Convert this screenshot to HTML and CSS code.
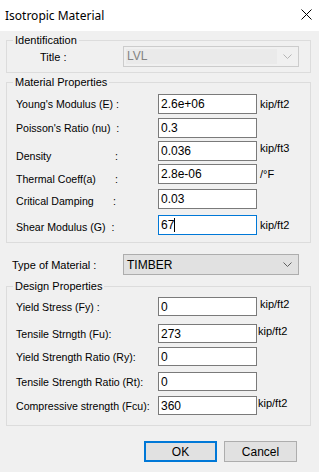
FILE: index.html
```html
<!DOCTYPE html>
<html>

<head>
  <title>Isotropic Material</title>
  <link rel="stylesheet" href="styles.css">
</head>

<body>
  <div class="window">
    <div class="titlebar">
      <span class="title">Isotropic Material</span>
      <svg class="close" width="11" height="11" viewBox="0 0 11 11">
        <path d="M0.5 0.5 L10.5 10.5 M10.5 0.5 L0.5 10.5" stroke="#000" stroke-width="1" fill="none"/>
      </svg>
    </div>

    <div class="dialog">
      <fieldset class="group group-id">
        <legend>Identification</legend>
        <div class="title-row">
          <span class="title-label">Title :</span>
          <div class="combo disabled">
            <span class="combo-text">LVL</span>
            <svg class="chevron" width="9" height="5" viewBox="0 0 9 5"><path d="M0.5 0.5 L4.5 4.5 L8.5 0.5" stroke="#b5b5b5" fill="none"/></svg>
          </div>
        </div>
      </fieldset>

      <fieldset class="group group-mat">
        <legend>Material Properties</legend>
        <div class="rows">
          <div class="row">
            <span class="label">Young's Modulus (E) :</span>
            <input class="field" value="2.6e+06">
            <span class="unit">kip/ft2</span>
          </div>
          <div class="row r-poisson">
            <span class="label">Poisson's Ratio (nu) &nbsp;:</span>
            <input class="field" value="0.3">
          </div>
          <div class="row r-density">
            <span class="label low"><span class="name">Density</span>:</span>
            <input class="field" value="0.036">
            <span class="unit up">kip/ft3</span>
          </div>
          <div class="row r-thermal">
            <span class="label low"><span class="name">Thermal Coeff(a)</span>:</span>
            <input class="field" value="2.8e-06">
            <span class="unit">/°F</span>
          </div>
          <div class="row r-damping">
            <span class="label mid"><span class="name short">Critical Damping</span>:</span>
            <input class="field" value="0.03">
          </div>
          <div class="row r-shear">
            <span class="label mid">Shear Modulus (G) &nbsp;:</span>
            <div class="field focused">67<span class="caret"></span></div>
            <span class="unit">kip/ft2</span>
          </div>
        </div>
      </fieldset>

      <div class="type-row">
        <span class="type-label">Type of Material :</span>
        <div class="combo">
          <span class="combo-text">TIMBER</span>
          <svg class="chevron" width="9" height="5" viewBox="0 0 9 5"><path d="M0.5 0.5 L4.5 4.5 L8.5 0.5" stroke="#606060" fill="none"/></svg>
        </div>
      </div>

      <fieldset class="group group-design">
        <legend>Design Properties</legend>
        <div class="rows">
          <div class="row small">
            <span class="label">Yield Stress (Fy) :</span>
            <input class="field" value="0">
            <span class="unit up">kip/ft2</span>
          </div>
          <div class="row small r-tensile">
            <span class="label">Tensile Strngth (Fu):</span>
            <input class="field" value="273">
            <span class="unit up tight">kip/ft2</span>
          </div>
          <div class="row small r-ry">
            <span class="label">Yield Strength Ratio (Ry):</span>
            <input class="field" value="0">
          </div>
          <div class="row small r-rt">
            <span class="label">Tensile Strength Ratio (Rt):</span>
            <input class="field" value="0">
          </div>
          <div class="row small r-fcu">
            <span class="label">Compressive strength (Fcu):</span>
            <input class="field" value="360">
            <span class="unit up tight">kip/ft2</span>
          </div>
        </div>
      </fieldset>

      <div class="buttons">
        <button class="btn default">OK</button>
        <button class="btn">Cancel</button>
      </div>
    </div>
  </div>
</body>

</html>
```

FILE: styles.css
```css
body {
  margin: 0;
  background-color: #f0f0f0;
  font-family: "Liberation Sans", Arial, sans-serif;
  font-size: 10.6px;
  color: #000;
}

.window {
  width: 319px;
  height: 472px;
  background-color: #f0f0f0;
}

/* title bar */
.titlebar {
  height: 31px;
  background-color: #fff;
  display: flex;
  align-items: center;
  justify-content: space-between;
  padding: 0 7px 0 5px;
}

.title {
  font-family: "Noto Sans", sans-serif;
  font-size: 12px;
  margin-top: -1px;
}

.close {
  display: block;
  margin-top: -2px;
}

.dialog {
  padding: 3px 8px 0 6px;
}

/* group boxes */
.group {
  margin: 0;
  padding: 0;
  min-width: 0;
  border: 1px solid #dcdcdc;
}

.group legend {
  margin-left: 6px;
  padding: 0 2px;
  font-size: 11px;
  line-height: 12px;
}

.group-id {
  padding-bottom: 5px;
}

.group-mat {
  margin-top: 3px;
}

.group-design {
  margin-top: 5px;
}

.title-row {
  display: flex;
  align-items: center;
}

.title-label {
  margin-left: 33px;
  width: 83px;
  font-size: 11px;
}

/* combo boxes */
.combo {
  box-sizing: border-box;
  width: 176px;
  height: 21px;
  display: flex;
  align-items: center;
  justify-content: space-between;
  border: 1px solid #adadad;
  background-color: #e1e1e1;
  padding: 0 6px 0 3px;
}

.combo.disabled {
  border-color: #cccccc;
  background-color: #f0f0f0;
  padding: 2px 6px 2px 2px;
  align-items: stretch;
}

.combo.disabled .combo-text {
  flex: 1;
  background-color: #eaeaea;
  color: #838383;
  font-size: 12px;
  line-height: 15px;
  padding-left: 1px;
  margin-right: 6px;
}

.combo.disabled .chevron {
  align-self: center;
}

.combo-text {
  font-size: 12px;
}

.chevron {
  display: block;
}

/* property rows */
.rows {
  padding: 6px 0 7px 9px;
}

.row {
  display: flex;
  align-items: center;
  height: 20px;
}

.row.small {
  height: 19px;
}

.label {
  width: 142px;
  flex-shrink: 0;
  white-space: nowrap;
}

.label.low {
  padding-top: 9px;
}

.label.mid {
  padding-top: 4px;
}

.name {
  display: inline-block;
  width: 99px;
}

.name.short {
  width: 97px;
}

.r-poisson {
  margin-top: 4px;
}

.r-density,
.r-thermal {
  margin-top: 3px;
}

.r-damping {
  margin-top: 5px;
}

.r-shear {
  margin-top: 6px;
}

.field {
  box-sizing: border-box;
  width: 99px;
  height: 100%;
  margin: 0;
  border: 1px solid #7a7a7a;
  background-color: #fff;
  font-family: "Liberation Sans", Arial, sans-serif;
  font-size: 12px;
  color: #000;
  padding: 0 2px;
  outline: none;
}

.field.focused {
  border-color: #0078d7;
  display: flex;
  align-items: center;
}

.caret {
  display: inline-block;
  width: 1px;
  height: 14px;
  background-color: #000;
}

.unit {
  margin-left: 3px;
  font-size: 11px;
}

.unit.up {
  margin-bottom: 6px;
}

.unit.tight {
  margin-left: 1px;
}

.group-design .rows {
  padding: 5px 0 10px 9px;
}

.r-tensile {
  margin-top: 8px;
}

.r-ry {
  margin-top: 4px;
}

.r-rt {
  margin-top: 6px;
}

.r-fcu {
  margin-top: 5px;
}

/* type of material */
.type-row {
  display: flex;
  align-items: center;
  margin-top: 11px;
}

.type-label {
  width: 117px;
  padding-left: 6px;
  box-sizing: border-box;
  font-size: 11px;
}

/* buttons */
.buttons {
  display: flex;
  justify-content: flex-end;
  gap: 7px;
  margin-top: 15px;
  padding-right: 14px;
}

.btn {
  box-sizing: border-box;
  width: 73px;
  height: 21px;
  border: 1px solid #adadad;
  background-color: #e1e1e1;
  font-family: "Liberation Sans", Arial, sans-serif;
  font-size: 12px;
  color: #000;
  padding: 0;
}

.btn.default {
  border: 2px solid #0078d7;
}
```
